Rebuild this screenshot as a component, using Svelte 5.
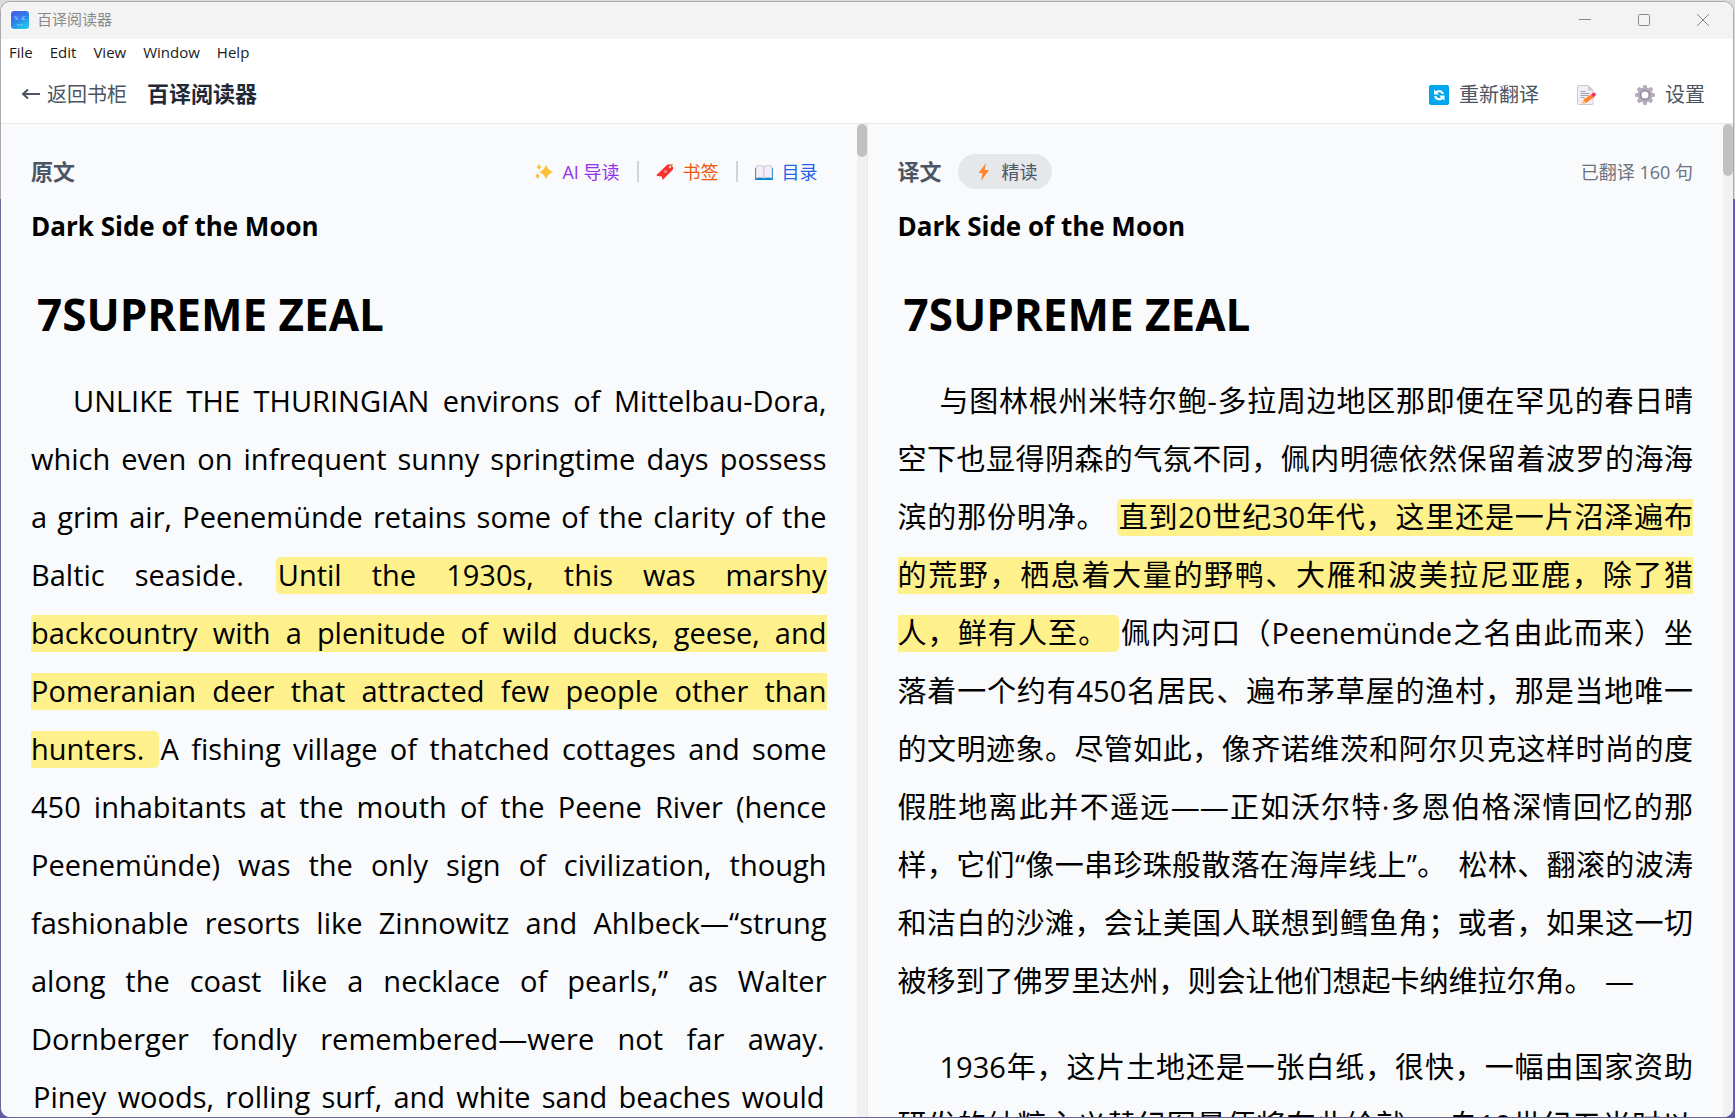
<script>
  const menu = ['File', 'Edit', 'View', 'Window', 'Help'];

  const bookTitle = 'Dark Side of the Moon';
  const chapterTitle = '7SUPREME ZEAL';
  const translatedCount = 160;

  const original = [
    [
      'UNLIKE THE THURINGIAN environs of Mittelbau-Dora, which even on infrequent sunny springtime days possess a\u00a0grim air, Peenemünde retains some of the clarity of the Baltic seaside. ',
      'Until the 1930s, this was marshy backcountry with a plenitude of wild ducks, geese, and Pomeranian deer that attracted few people other than hunters. ',
      'A fishing village of thatched cottages and some 450 inhabitants at the mouth of the Peene River (hence Peenemünde) was the only sign of civilization, though fashionable resorts like Zinnowitz and Ahlbeck—“strung along the coast like a necklace of pearls,” as Walter Dornberger fondly remembered—were not far away. ',
      'Piney woods, rolling surf, and white sand beaches would'
    ]
  ];

  const translated = [
    [
      '与图林根州米特尔鲍-多拉周边地区那即便在罕见的春日晴空下也显得阴森的气氛不同，佩内明德依然保留着波罗的海海滨的那份明净。 ',
      '直到20世纪30年代，这里还是一片沼泽遍布的荒野，栖息着大量的野鸭、大雁和波美拉尼亚鹿，除了猎人，鲜有人至。 ',
      '佩内河口（Peenemünde之名由此而来）坐落着一个约有450名居民、遍布茅草屋的渔村，那是当地唯一的文明迹象。尽管如此，像齐诺维茨和阿尔贝克这样时尚的度假胜地离此并不遥远——正如沃尔特·多恩伯格深情回忆的那样，它们“像一串珍珠般散落在海岸线上”。 ',
      '松林、翻滚的波涛和洁白的沙滩，会让美国人联想到鳕鱼角；或者，如果这一切被移到了佛罗里达州，则会让他们想起卡纳维拉尔角。 ',
      '—'
    ],
    [
      '1936年，这片土地还是一张白纸，很快，一幅由国家资助研发的纳粹主义替纪图景便将在此绘就。 ',
      '自19世纪五光时以'
    ]
  ];

  let active = $state(1);
</script>

<div class="desktop">
  <div class="window">
    <div class="titlebar">
      <svg class="app-icon" viewBox="0 0 20 20">
        <defs>
          <linearGradient id="app-bg" x1="0" y1="0" x2="0.6" y2="1">
            <stop offset="0" stop-color="#4a5be0" />
            <stop offset="0.5" stop-color="#2f7bea" />
            <stop offset="1" stop-color="#1fc4e8" />
          </linearGradient>
        </defs>
        <rect width="20" height="20" rx="3" fill="#fff" />
        <rect x="1" y="1" width="18" height="18" rx="3" fill="url(#app-bg)" />
        <path d="M4.500 6l2 2.500M7.500 6.500l-2.500 3M6 9h2.500M11.500 8l3.500-1.500M11.500 9.500h4M13 6.500v3" stroke="#8fb4ff" fill="none" />
        <path d="M7 14.500q3 1.500 6 0" stroke="#5fd4f5" fill="none" />
      </svg>
      <span class="app-name">百译阅读器</span>
      <div class="controls">
        <button aria-label="Minimize">
          <svg viewBox="0 0 14 14"><path d="M1 6.500h12" /></svg>
        </button>
        <button aria-label="Maximize">
          <svg viewBox="0 0 14 14"><rect x="1.500" y="1.500" width="11" height="11" rx="1" /></svg>
        </button>
        <button aria-label="Close">
          <svg viewBox="0 0 14 14"><path d="M1 1l12 12M13 1L1 13" /></svg>
        </button>
      </div>
    </div>

    <nav class="menubar">
      {#each menu as item}
        <button>{item}</button>
      {/each}
    </nav>

    <header>
      <button class="back">
        <svg viewBox="0 0 20 20"><path d="M19 9H2M7 4.500L2 9l5 4.500" /></svg>
        返回书柜
      </button>
      <h1>百译阅读器</h1>
      <div class="actions">
        <button>
          <svg viewBox="0 0 20 20">
            <rect width="20" height="20" rx="2" fill="#00a6ed" />
            <path d="M5 9.500V4.500l1.700 1.700A5.200 5.200 0 0 1 15 9h-2.200a3 3 0 0 0-4.500-1.200L10 9.500z" fill="#fff" />
            <path d="M15.500 10.500v5.300l-1.800-1.700A5.300 5.300 0 0 1 5 11h2.300a3 3 0 0 0 4.700 1.400L10.300 10.500z" fill="#fff" />
          </svg>
          重新翻译
        </button>
        <button aria-label="笔记">
          <svg viewBox="0 0 20 20">
            <path d="M1.500.5H11l5 5V18.500a1 1 0 0 1-1 1H1.500a1 1 0 0 1-1-1v-17a1 1 0 0 1 1-1z" fill="#f3eef8" stroke="#cfc4d8" />
            <path d="M11 0l5.500 5.500H12a1 1 0 0 1-1-1z" fill="#cdc4d6" />
            <path d="M3.500 6.500h5M3.500 8.500h9M3.500 10.500h8M3.500 12.500h4" stroke="#a79fae" />
            <path d="M6.500 14.500L14 9.500l2.500 3L9 18l-4 .5z" fill="#ff822d" />
            <path d="M6.300 14.600L9 18l-4 .5z" fill="#ffce7c" />
            <path d="M14 9.500l1.800-1.500a1.800 1.800 0 0 1 2.500 2.800L16.500 12.500z" fill="#f92f60" />
          </svg>
        </button>
        <button>
          <svg viewBox="0 0 20 20">
            <g fill="#b4acbc">
              {#each [0, 45, 90, 135, 180, 225, 270, 315] as angle}
                <rect x="8" y="0" width="4" height="5" rx="1.500" transform="rotate({angle} 10 10)" />
              {/each}
            </g>
            <circle cx="10" cy="10" r="5.500" fill="#fff" stroke="#b4acbc" stroke-width="4" />
            <circle cx="10" cy="10" r="4.500" fill="none" stroke="#998ea4" stroke-width="1.500" />
          </svg>
          设置
        </button>
      </div>
    </header>

    <main>
      <section class="pane">
        <div class="content">
          <div class="toolbar">
            <h2>原文</h2>
            <div class="links">
              <button class="guide">
                <svg viewBox="0 0 18 18" fill="#fcc039">
                  <path d="M11 1.500q1.500 5.500 7 7.500-5.500 2-7 7.500-1.500-5.500-6.500-7.500 5-2 6.500-7.500z" />
                  <path d="M4 1q.7 2 2.500 3-1.800.8-2.500 3Q3.300 4.800 1.500 4 3.300 3 4 1zM2.500 10q.7 2.200 2.500 3-1.800.8-2.500 3Q1.800 13.800 0 13q1.800-.8 2.500-3z" />
                </svg>
                AI 导读
              </button>
              <span class="divider"></span>
              <button class="bookmark">
                <svg viewBox="0 0 18 18">
                  <path d="M.5 12L11.500 1.500h3L17 4v2.500L6.500 17l-.7-3.500L1 13z" fill="#f8312f" />
                  <path d="M14 4l2.500-3" stroke="#d3883e" stroke-width="1.200" />
                  <circle cx="14" cy="4" r="1.200" fill="#ffd0c8" />
                  <circle cx="9.500" cy="8.500" r="1.600" fill="#ff8a86" />
                </svg>
                书签
              </button>
              <span class="divider"></span>
              <button class="toc">
                <svg viewBox="0 0 18 18">
                  <path d="M0 5h18v11a1 1 0 0 1-1 1H1a1 1 0 0 1-1-1z" fill="#0084ce" />
                  <path d="M1 3.500Q5 1.500 9 3.500v11.500q-4-1-8 0z" fill="#f3eef8" stroke="#c4b8d0" stroke-width="0.700" />
                  <path d="M17 3.500Q13 1.500 9 3.500v11.500q4-1 8 0z" fill="#f3eef8" stroke="#c4b8d0" stroke-width="0.700" />
                </svg>
                目录
              </button>
            </div>
          </div>
          <h3>{bookTitle}</h3>
          <h4>{chapterTitle}</h4>
          {#each original as paragraph}
            <p>
              {#each paragraph as sentence, i}<span class="sentence" class:active={i === active}><span>{sentence}</span></span>{/each}
            </p>
          {/each}
        </div>
        <div class="track"><div class="thumb short"></div></div>
      </section>

      <section class="pane">
        <div class="content">
          <div class="toolbar">
            <h2>译文</h2>
            <button class="mode">
              <svg viewBox="0 0 18 18"><path d="M11 0L3.500 10h4L6 18l8-11H9.500z" fill="#ff822d" /></svg>
              精读
            </button>
            <span class="count">已翻译 {translatedCount} 句</span>
          </div>
          <h3>{bookTitle}</h3>
          <h4>{chapterTitle}</h4>
          {#each translated as paragraph, p}
            <p>
              {#each paragraph as sentence, i}<span class="sentence" class:active={p === 0 && i === active}><span>{sentence}</span></span>{/each}
            </p>
          {/each}
        </div>
        <div class="track"><div class="thumb"></div></div>
      </section>
    </main>
  </div>
</div>

<style>
  :global(body) {
    font-family: 'Open Sans', 'Noto Sans CJK SC', sans-serif;
  }

  .desktop {
    box-sizing: border-box;
    height: 100vh;
    padding: 1px 1px 0 0;
    background: linear-gradient(#dcdcdc 199px, #5d5aa8 199px);
  }

  .window {
    box-sizing: border-box;
    display: flex;
    flex-direction: column;
    height: 100%;
    border: 1px solid rgba(120, 120, 130, 0.5);
    border-radius: 10px;
    background: #fff;
    background-clip: padding-box;
    overflow: hidden;
  }

  button {
    display: flex;
    align-items: center;
    padding: 0;
    border: none;
    background: none;
    font: inherit;
    color: inherit;
    cursor: pointer;
  }

  h1, h2, h3, h4, p {
    margin: 0;
  }

  .titlebar {
    display: flex;
    align-items: center;
    flex: none;
    height: 35px;
    padding: 0 0 2px 9px;
    background: #f3f3f3;
  }

  .app-icon {
    width: 20px;
    height: 20px;
  }

  .app-name {
    margin-left: 7px;
    padding-bottom: 1px;
    font-size: 15px;
    line-height: 16px;
    color: #8a8a8a;
  }

  .controls {
    display: flex;
    margin-left: auto;
    padding-right: 1px;
  }

  .controls button {
    justify-content: center;
    width: 59px;
    height: 35px;
  }

  .controls svg {
    width: 14px;
    height: 14px;
    fill: none;
    stroke: #8a8a8a;
  }

  .menubar {
    display: flex;
    align-items: center;
    flex: none;
    gap: 17px;
    height: 25px;
    padding: 0 0 2px 8px;
    font-size: 15px;
    line-height: 16px;
    color: #1a1a1a;
  }

  header {
    display: flex;
    align-items: center;
    flex: none;
    height: 57px;
    padding: 0 28px 0 20px;
    border-bottom: 1px solid #e5e7eb;
    font-size: 20px;
    line-height: 20px;
    color: #4b5563;
  }

  .back {
    gap: 6px;
  }

  .back svg {
    width: 20px;
    height: 20px;
    fill: none;
    stroke: #4b5563;
    stroke-width: 2;
  }

  h1 {
    margin-left: 20px;
    padding-bottom: 3px;
    font-size: 22px;
    color: #1f2937;
  }

  .actions {
    display: flex;
    gap: 38px;
    margin-left: auto;
  }

  .actions button {
    gap: 10px;
  }

  .actions svg {
    width: 20px;
    height: 20px;
  }

  main {
    display: flex;
    flex: 1;
    min-height: 0;
    background: #f9fafb;
  }

  .pane {
    display: flex;
    flex: 1;
    min-width: 0;
  }

  .pane + .pane {
    border-left: 1px solid #e5e7eb;
  }

  .content {
    flex: 1;
    min-width: 0;
    padding: 30px;
    overflow: hidden;
  }

  .track {
    flex: none;
    width: 10px;
    background: #f1f1f1;
  }

  .thumb {
    height: 52px;
    border-radius: 5px;
    background: #c1c1c1;
  }

  .thumb.short {
    height: 33px;
  }

  .toolbar {
    display: flex;
    align-items: center;
    height: 35px;
    font-size: 18px;
    line-height: 18px;
  }

  h2 {
    padding-bottom: 2px;
    font-size: 22px;
    color: #4b5563;
  }

  .links {
    display: flex;
    align-items: center;
    gap: 17px;
    margin-left: auto;
    padding-right: 9px;
  }

  .links button {
    gap: 9px;
  }

  .links svg,
  .mode svg {
    width: 18px;
    height: 18px;
  }

  .guide {
    color: #9333ea;
  }

  .bookmark {
    color: #ea580c;
  }

  .toc {
    color: #2563eb;
  }

  .divider {
    width: 2px;
    height: 21px;
    background: #d1d5db;
  }

  .mode {
    gap: 9px;
    height: 35px;
    margin-left: 16px;
    padding: 0 14px 0 17px;
    border-radius: 18px;
    background: #e5e7eb;
    color: #4b5563;
  }

  .count {
    margin-left: auto;
    color: #6b7280;
  }

  h3 {
    margin-top: 19px;
    font-size: 26px;
    font-weight: 700;
    line-height: 36px;
    color: #000;
  }

  h4 {
    margin: 40px 0 28px;
    padding-left: 6px;
    font-size: 44px;
    font-weight: 700;
    line-height: 60px;
    color: #000;
  }

  p {
    margin-bottom: 28px;
    font-size: 29px;
    line-height: 58px;
    color: #000;
    text-align: justify;
    text-indent: 40px;
  }

  /* the last paragraph runs on below the fold */
  p:last-child {
    text-align-last: justify;
  }

  /* the outer span only sets the height of the highlight band */
  .sentence {
    padding: 0 2px;
    border-radius: 5px;
    font-family: Roboto, sans-serif;
    font-size: 31px;
    line-height: 30px;
  }

  .sentence > span {
    font-family: 'Open Sans', 'Noto Sans CJK SC', sans-serif;
    font-size: 29px;
    line-height: 58px;
  }

  .active {
    background: #fef08a;
  }
</style>
